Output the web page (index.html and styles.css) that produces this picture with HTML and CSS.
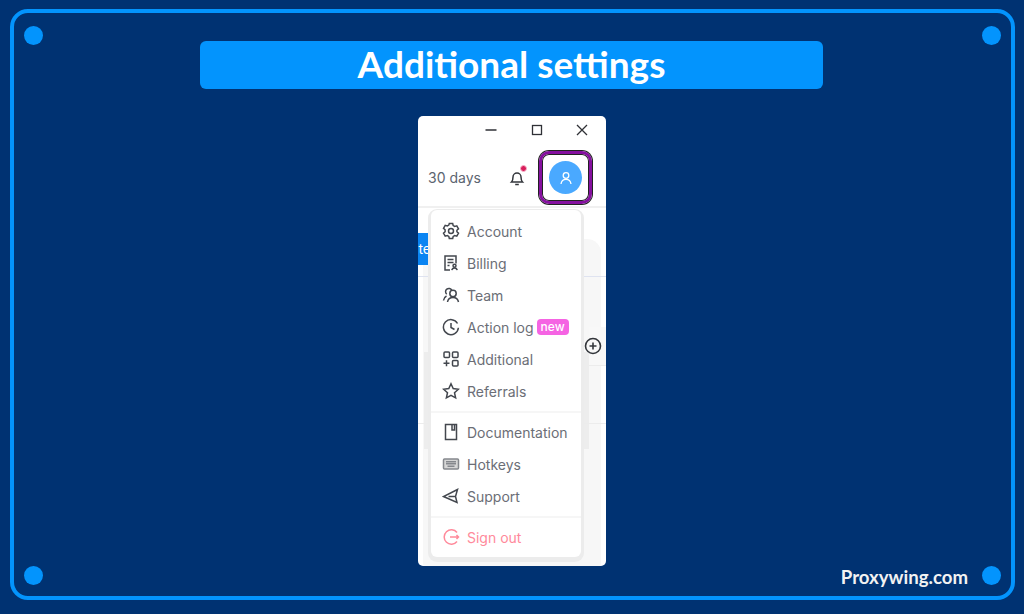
FILE: index.html
```html
<!DOCTYPE html>
<html lang="en">
<head>
    <meta charset="UTF-8">
    <meta name="viewport" content="width=device-width, initial-scale=1.0">
    <title>Additional settings</title>
    <link rel="stylesheet" href="styles.css">
</head>
<body>
    <div class="frame">
        <span class="dot dot-tl"></span>
        <span class="dot dot-tr"></span>
        <span class="dot dot-bl"></span>
        <span class="dot dot-br"></span>

        <h1 class="title">Additional settings</h1>

        <div class="window">
            <div class="window-controls">
                <svg class="ctl" viewBox="0 0 14 14"><path d="M1.5 7h11"/></svg>
                <svg class="ctl" viewBox="0 0 14 14"><rect x="2.5" y="2.5" width="9" height="9"/></svg>
                <svg class="ctl" viewBox="0 0 14 14"><path d="M2 2l10 10M12 2L2 12"/></svg>
            </div>
            <div class="window-header">
                <span class="days">30 days</span>
                <span class="bell">
                    <svg viewBox="0 0 16 16" width="16" height="16"><path d="M2.500 12c1.200-1.200 1.500-2.500 1.500-5a4 4 0 0 1 8 0c0 2.500.3 3.800 1.500 5zM6.200 14.500h3.600"/></svg>
                    <i class="bell-badge"></i>
                </span>
                <span class="avatar-ring">
                    <span class="avatar">
                        <svg viewBox="0 0 16 16" width="16" height="16"><circle cx="8" cy="5.500" r="2.800"/><path d="M3 14c.4-3 2.200-4.700 5-4.700s4.600 1.700 5 4.700"/></svg>
                    </span>
                </span>
            </div>

            <div class="behind">
                <div class="behind-halo"></div>
                <div class="behind-band"></div>
                <div class="behind-btn"><span>ite</span></div>
                <div class="behind-line"></div>
                <div class="behind-row behind-row-add">
                    <svg class="add-icon" viewBox="0 0 18 18" width="18" height="18"><circle cx="9" cy="9" r="7.500"/><path d="M5.500 9h7M9 5.500v7"/></svg>
                </div>
                <div class="behind-row behind-row-low"></div>
            </div>

            <div class="menu">
                <div class="menu-group">
                    <div class="menu-item">
                        <svg class="icon" viewBox="0 0 18 18"><path d="M7.300 1.500h3.400l.5 2.100 1.500.9 2.100-.6 1.700 2.900-1.600 1.500v1.400l1.600 1.500-1.700 2.900-2.100-.6-1.500.9-.5 2.100H7.300l-.5-2.100-1.500-.9-2.100.6-1.700-2.900 1.600-1.500V7.800L1.500 6.300l1.700-2.900 2.100.6 1.500-.9z"/><circle cx="9" cy="9" r="2.500"/></svg>
                        <span>Account</span>
                    </div>
                    <div class="menu-item">
                        <svg class="icon" viewBox="0 0 18 18"><path d="M8 16H3V2h11v7.500M5.500 5.500h6M5.500 8.500h6M5.500 11.500h2"/><circle cx="12.500" cy="11.800" r="1.500"/><path d="M9.800 16.200c.3-1.500 1.300-2.300 2.700-2.300s2.400.8 2.700 2.300"/></svg>
                        <span>Billing</span>
                    </div>
                    <div class="menu-item">
                        <svg class="icon" viewBox="0 0 18 18"><path d="M4.700 8.200A3.300 3.300 0 1 1 9.800 4.200"/><circle cx="11" cy="7.500" r="3.200"/><path d="M1.500 14.500c.3-2 1.300-3.600 3-4.500M5.500 16c.4-2.800 2.400-4.500 5.500-4.500s5 1.700 5.500 4.500"/></svg>
                        <span>Team</span>
                    </div>
                    <div class="menu-item">
                        <svg class="icon" viewBox="0 0 18 18"><path d="M15.500 5.500A7.500 7.500 0 1 0 16.400 9.800M9 5v4.500l3.500 2"/></svg>
                        <span>Action log</span>
                        <em class="badge">new</em>
                    </div>
                    <div class="menu-item">
                        <svg class="icon" viewBox="0 0 18 18"><rect x="2" y="2" width="5.500" height="5.500" rx="1"/><rect x="10.500" y="2" width="5.500" height="5.500" rx="1"/><rect x="10.500" y="10.500" width="5.500" height="5.500" rx="1"/><path d="M1.500 13.200h6M4.500 10.200v6"/></svg>
                        <span>Additional</span>
                    </div>
                    <div class="menu-item">
                        <svg class="icon" viewBox="0 0 18 18"><path d="M9 1.800l2.200 4.800 5.200.6-3.900 3.500 1.100 5.200L9 13.300l-4.600 2.600 1.100-5.200-3.900-3.500 5.200-.6z"/></svg>
                        <span>Referrals</span>
                    </div>
                </div>
                <div class="menu-group">
                    <div class="menu-item">
                        <svg class="icon" viewBox="0 0 18 18"><path d="M3.500 1.500h11v15h-11zM10 1.500v5.500h2.500V1.500"/></svg>
                        <span>Documentation</span>
                    </div>
                    <div class="menu-item">
                        <svg class="icon icon-soft" viewBox="0 0 18 18"><rect x="1.500" y="4" width="15" height="10" rx="1"/><path d="M4 6.800h10M4 8.800h10M5.500 11.200h7"/></svg>
                        <span>Hotkeys</span>
                    </div>
                    <div class="menu-item">
                        <svg class="icon" viewBox="0 0 18 18"><path d="M15.500 2.500L1.500 9.500l13.500 6-1.500-6zM13.500 9.500H6.500"/></svg>
                        <span>Support</span>
                    </div>
                </div>
                <div class="menu-group">
                    <div class="menu-item menu-item-danger">
                        <svg class="icon" viewBox="0 0 18 18"><path d="M15 4.500A7.200 7.200 0 1 0 15 13.500M8 9h8.500M14.500 7l2 2-2 2"/></svg>
                        <span>Sign out</span>
                    </div>
                </div>
            </div>
        </div>

        <div class="brand">Proxywing.com</div>
    </div>
</body>
</html>
```

FILE: styles.css
```css
* {
    box-sizing: border-box;
}

html,
body {
    height: 100%;
}

body {
    margin: 0;
    padding: 9px 9px 10px 10px;
    background-color: #003272;
    font-family: "Inter", Arial, sans-serif;
}

.frame {
    position: relative;
    height: 591px;
    border: 4px solid #0394fd;
    border-radius: 18px;
    padding-top: 28px;
    display: flex;
    flex-direction: column;
    align-items: center;
}

.dot {
    position: absolute;
    width: 19px;
    height: 19px;
    border-radius: 50%;
    background-color: #0394fd;
}

.dot-tl { left: 10px; top: 13px; }
.dot-tr { right: 10px; top: 13px; }
.dot-bl { left: 10px; bottom: 11px; }
.dot-br { right: 10px; bottom: 11px; }

.title {
    width: 623px;
    height: 48px;
    margin: 0 0 27px -2px;
    background-color: #0394fd;
    border-radius: 6px;
    color: #fff;
    font-family: "Lato", Arial, sans-serif;
    font-size: 37px;
    font-weight: 700;
    line-height: 46px;
    text-align: center;
}

.window {
    position: relative;
    width: 188px;
    height: 450px;
    margin-left: -1px;
    background-color: #fff;
    border-radius: 5px;
    overflow: hidden;
}

.window-controls {
    height: 28px;
    padding: 7px 17px 0 66px;
    display: flex;
    justify-content: space-between;
}

.ctl {
    width: 14px;
    height: 14px;
    fill: none;
    stroke: #2f3136;
    stroke-width: 1.300;
}

.window-header {
    height: 64px;
    padding: 5px 15px 0 10px;
    display: flex;
    align-items: center;
    border-bottom: 2px solid #f0f0f0;
}

.days {
    width: 53px;
    flex: none;
    font-size: 14px;
    color: #5b6470;
    white-space: nowrap;
}

.bell {
    position: relative;
    margin-left: 28px;
    height: 16px;
    display: block;
}

.bell svg {
    fill: none;
    stroke: #33363b;
    stroke-width: 1.500;
}

.bell-badge {
    position: absolute;
    top: -5px;
    right: -2px;
    width: 7px;
    height: 7px;
    border-radius: 50%;
    background-color: #d81e5b;
    border: 1px solid #f7b8cc;
}

.avatar-ring {
    margin-left: 14px;
    width: 53px;
    height: 53px;
    flex: none;
    border: 3px solid #85109f;
    box-shadow: 0 0 0 1px #222, inset 0 0 0 1px #222;
    border-radius: 10px;
    display: flex;
    align-items: center;
    justify-content: center;
}

.avatar {
    width: 33px;
    height: 33px;
    border-radius: 50%;
    background-color: #4aa9ff;
    display: flex;
    align-items: center;
    justify-content: center;
}

.avatar svg {
    fill: none;
    stroke: #fff;
    stroke-width: 1.300;
}

.behind {
    position: relative;
    height: 358px;
}

/* soft grey block left behind the menu */
.behind-halo {
    position: absolute;
    left: 5px;
    top: 6px;
    width: 178px;
    height: 358px;
    background-color: #f7f7f7;
    border-radius: 14px;
}

.behind-band {
    position: absolute;
    left: 6px;
    top: 119px;
    width: 165px;
    height: 97px;
    background-color: #ededed;
}

.behind-btn {
    position: relative;
    width: 13px;
    height: 32px;
    margin-top: 25px;
    background-color: #0a84f2;
    color: #fff;
    font-size: 14px;
    line-height: 32px;
    overflow: hidden;
    direction: rtl;
}

.behind-line {
    position: relative;
    height: 1px;
    margin-top: 11px;
    background-color: #dfe3f0;
}

.behind-row {
    position: relative;
    border-bottom: 1px solid #ececec;
}

.behind-row-add {
    margin-top: 50px;
    margin-left: 171px;
    height: 39px;
    padding-right: 4px;
    display: flex;
    justify-content: flex-end;
    align-items: center;
    background-color: #f8f8f8;
}

.behind-row-low {
    height: 58px;
}

.add-icon {
    margin-right: 0;
    margin-left: -6px;
    flex: none;
    fill: none;
    stroke: #33363b;
    stroke-width: 1.600;
}

.menu {
    position: absolute;
    left: 13px;
    top: 94px;
    width: 150px;
    height: 347px;
    background-color: #fff;
    border-radius: 6px;
    box-shadow: 0 2px 0 3px #ececec;
    padding-top: 5px;
}

.menu-group {
    padding-bottom: 4px;
    margin-bottom: 3px;
    border-bottom: 2px solid #f6f6f6;
}

.menu-group:last-child {
    border-bottom: 0;
}

.menu-item {
    height: 32px;
    padding-left: 11px;
    display: flex;
    align-items: center;
    font-size: 14px;
    color: #6b6e76;
    white-space: nowrap;
}

.icon {
    width: 18px;
    height: 18px;
    margin-right: 7px;
    flex: none;
    fill: none;
    stroke: #43474e;
    stroke-width: 1.500;
}

.icon-soft {
    fill: #d6d6d6;
    stroke: #85888d;
}

.badge {
    margin-left: 3px;
    padding: 0 4px;
    height: 16px;
    background-color: #f564e3;
    border-radius: 4px;
    color: #fff;
    font-size: 12px;
    font-style: normal;
    font-weight: 500;
    line-height: 16px;
}

.menu-item-danger {
    color: #ff8a9b;
}

.menu-item-danger .icon {
    stroke: #ff8a9b;
}

.brand {
    position: absolute;
    right: 43px;
    bottom: 8px;
    color: #f2f2f2;
    font-family: "Lato", Arial, sans-serif;
    font-size: 18.600px;
    font-weight: 700;
}
```
